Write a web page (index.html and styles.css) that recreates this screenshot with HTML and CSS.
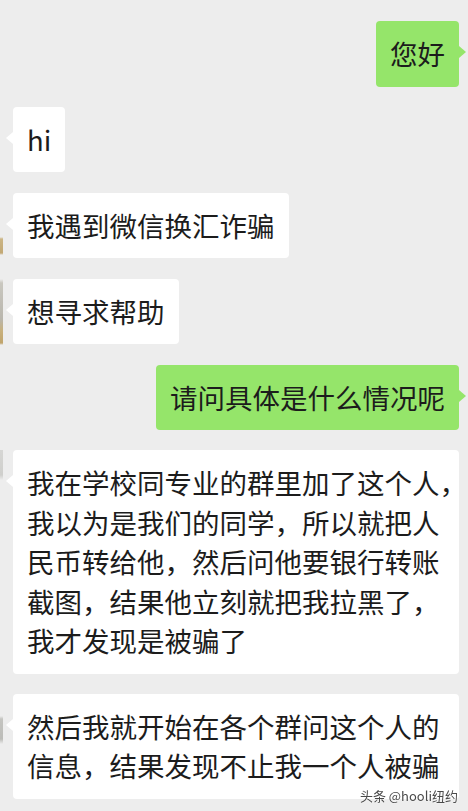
FILE: index.html
```html
<!DOCTYPE html>
<html lang="zh-CN">
<head>
<meta charset="utf-8">
<title>聊天记录</title>
<link rel="stylesheet" href="styles.css">
</head>
<body>
<div class="chat">
  <div class="row out"><div class="bubble green">您好</div></div>
  <div class="row in"><div class="avatar"></div><div class="bubble">hi</div></div>
  <div class="row in"><div class="avatar av1"></div><div class="bubble">我遇到微信换汇诈骗</div></div>
  <div class="row in"><div class="avatar av2"></div><div class="bubble">想寻求帮助</div></div>
  <div class="row out"><div class="bubble green">请问具体是什么情况呢</div></div>
  <div class="row in"><div class="avatar av3"></div>
    <div class="bubble wide">
      <span class="ln">我在学校同专业的群里加了这个人，</span>
      <span class="ln">我以为是我们的同学，所以就把人</span>
      <span class="ln">民币转给他，然后问他要银行转账</span>
      <span class="ln">截图，结果他立刻就把我拉黑了，</span>
      <span class="ln">我才发现是被骗了</span>
    </div>
  </div>
  <div class="row in"><div class="avatar av4"></div>
    <div class="bubble wide">
      <span class="ln">然后我就开始在各个群问这个人的</span>
      <span class="ln">信息，结果发现不止我一个人被骗</span>
    </div>
  </div>
</div>
<div class="watermark">头条 @hooli纽约</div>
</body>
</html>
```

FILE: styles.css
```css
html, body {
  margin: 0;
  padding: 0;
  background: #ededed;
  height: 100%;
  overflow: hidden;
}

body {
  font-family: "Noto Sans CJK SC", "Noto Sans", sans-serif;
  color: #1c1c1c;
}

.chat {
  display: flex;
  flex-direction: column;
  gap: 20px;
  padding: 21px 9px 0 0;
}

.row {
  display: flex;
  align-items: flex-start;
}

.row.out {
  justify-content: flex-end;
}

.avatar {
  flex: none;
  width: 3px;
  height: 66px;
  margin-right: 10px;
}

.av1 {
  background: linear-gradient(to bottom, transparent 0, transparent 44px, #cbb585 46px, #c2a874 60px, transparent 62px);
}

.av2 {
  background: linear-gradient(to bottom, transparent 0, #c9c7bf 4px, #b9b6ad 40px, #c8b07c 52px, #c0a46c 64px, transparent 66px);
}

.av3 {
  background: linear-gradient(to bottom, #d6d6d4 0, #cfcfcc 25px, transparent 30px);
}

.av4 {
  background: linear-gradient(to bottom, transparent 0, transparent 22px, #c4c4c0 25px, #bcbcb8 45px, transparent 50px);
}

.bubble {
  position: relative;
  background: #ffffff;
  border-radius: 4px;
  padding: 13px 14px;
  font-size: 27.5px;
  line-height: 39.5px;
  white-space: nowrap;
}

.bubble::before {
  content: "";
  position: absolute;
  top: 25px;
  border-top: 6px solid transparent;
  border-bottom: 6px solid transparent;
}

.in .bubble::before {
  left: -7px;
  border-right: 7px solid #ffffff;
}

.bubble.green {
  background: #95e56a;
}

.out .bubble::before {
  right: -7px;
  border-left: 7px solid #95e56a;
}

.bubble.wide {
  width: 446px;
  box-sizing: border-box;
}

.ln {
  display: block;
  white-space: nowrap;
}

.watermark {
  position: fixed;
  right: 10px;
  bottom: 9px;
  font-size: 13px;
  line-height: 13px;
  color: #4a4a4a;
  text-shadow: 0 0 2px #ffffff;
  font-family: "Noto Sans CJK SC", "Noto Sans", sans-serif;
}
```
